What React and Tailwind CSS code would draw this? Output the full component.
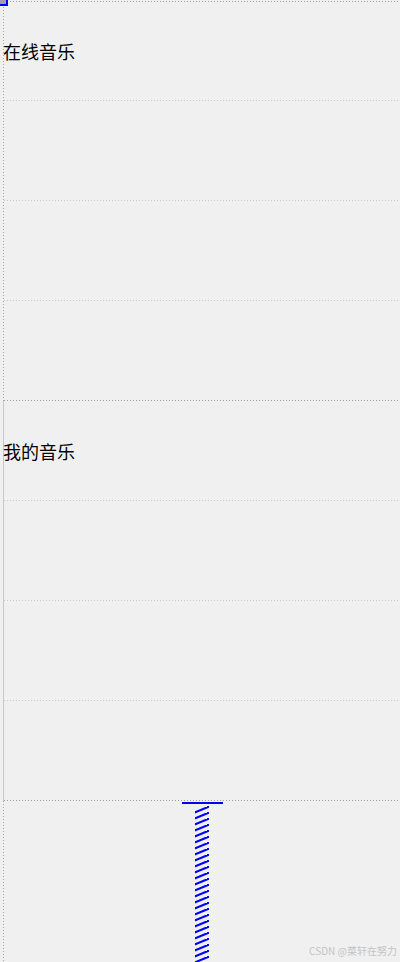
import React from 'react';

const dotH = 'bg-[repeating-linear-gradient(90deg,#c8c8c8_0_1px,transparent_1px_3px)]';
const dotHDark = 'bg-[repeating-linear-gradient(90deg,#a0a0a0_0_1px,transparent_1px_3px)]';
const dotV = 'bg-[repeating-linear-gradient(180deg,#a8a8a8_0_1px,transparent_1px_3px)]';

function Spring() {
  const steps = [];
  for (let y = 3; y < 165; y += 6) steps.push(y);
  return (
    <svg width="16" height="160" viewBox="0 0 16 160" className="block">
      {steps.map((y) => (
        <path key={y} d={`M2 ${y + 4} L2 ${y + 5} L14 ${y} L14 ${y - 1}`} stroke="#0000ff" strokeWidth="2" fill="none" />
      ))}
    </svg>
  );
}

function Row({ label, strong }) {
  return (
    <div className="h-[100px] flex flex-col">
      <div className="flex-1 flex items-center">
        {label && <span className="text-[18px] leading-none text-black -ml-px">{label}</span>}
      </div>
      <div className={`h-px ${strong ? dotHDark : dotH}`} />
    </div>
  );
}

function Group({ label, solid }) {
  return (
    <div className="flex h-[400px]">
      <div className={`w-px ${solid ? 'bg-[#c8c8c8]' : dotV}`} />
      <div className="flex-1 flex flex-col">
        <Row label={label} />
        <Row />
        <Row />
        <Row strong />
      </div>
    </div>
  );
}

export default function App() {
  return (
    <div className="w-[400px] h-[962px] bg-[#f0f0f0] relative overflow-hidden flex flex-col pl-[3px] pt-px font-['Microsoft_YaHei','Noto_Sans_CJK_SC',sans-serif]">
      <div className="absolute -left-[2px] -top-[2px] w-[10px] h-[8px] border-2 border-[#0000ff] bg-[#a0a0a0]" />
      <div className={`absolute left-[10px] right-0 top-px h-px ${dotHDark}`} />
      <Group label="在线音乐" />
      <Group label="我的音乐" solid />
      <div className="flex-1 flex">
        <div className={`w-px ${dotV}`} />
        <div className="flex-1 flex flex-col items-center pt-px">
          <div className="w-[41px] h-[2px] bg-[#0000ff]" />
          <Spring />
        </div>
      </div>
      <div className="absolute right-[3px] bottom-[4px] text-[10px] text-[#c4c4c4] font-['Noto_Sans_CJK_SC',sans-serif]">CSDN @菜轩在努力</div>
    </div>
  );
}
